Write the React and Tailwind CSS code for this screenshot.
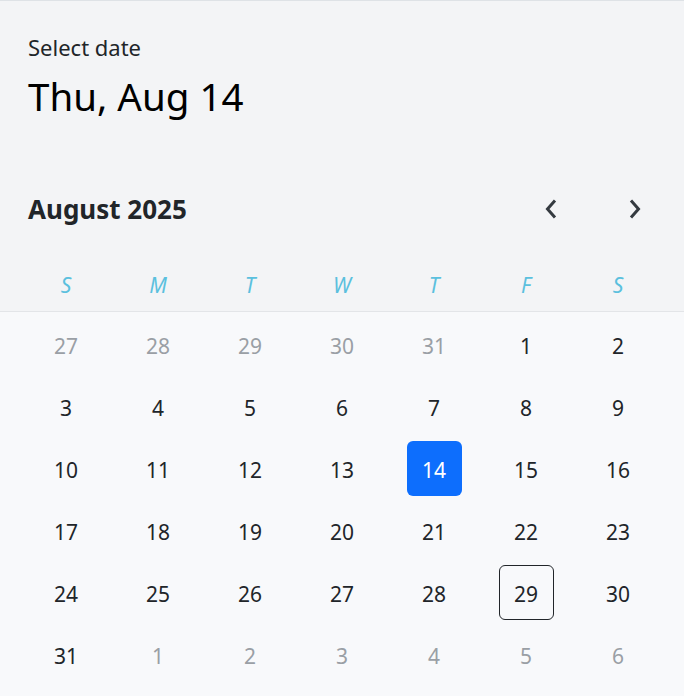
import React from 'react';

const weekdays = ['S', 'M', 'T', 'W', 'T', 'F', 'S'];

// August 2025, Sunday first, with leading/trailing days from adjacent months
const buildDays = () => {
  const days = [];
  [27, 28, 29, 30, 31].forEach(d => days.push({ d, muted: true }));
  for (let d = 1; d <= 31; d++) days.push({ d, muted: false });
  [1, 2, 3, 4, 5, 6].forEach(d => days.push({ d, muted: true }));
  return days;
};

const Chevron = ({ dir }) => (
  <svg width="14" height="22" viewBox="0 0 14 22" fill="none" className="text-[#343a40]">
    <path
      d={dir === 'left' ? 'M11 2.5 L3.5 11 L11 19.5' : 'M3 2.5 L10.5 11 L3 19.5'}
      stroke="currentColor"
      strokeWidth="3"
    />
  </svg>
);

export default function App() {
  const days = buildDays();
  const rows = [];
  for (let i = 0; i < days.length; i += 7) rows.push(days.slice(i, i + 7));

  return (
    <div
      className="min-h-screen bg-[#f8f9fb] text-[#212529]"
      style={{ fontFamily: '"Noto Sans", "Open Sans", sans-serif' }}
    >
      <div className="bg-[#f3f4f6] border-t border-[#dee2e6]">
        <div className="px-7 pt-[31px] text-[22px] leading-[30px]">Select date</div>
        <div className="px-7 mt-2 text-[38.5px] leading-[52px] text-black">Thu, Aug 14</div>

        <div className="mt-[67px] pl-7 pr-[42px] h-10 flex items-center justify-between">
          <span className="text-[26px] font-bold leading-10">August 2025</span>
          <div className="flex items-center gap-[70px]">
            <button className="flex items-center justify-center">
              <Chevron dir="left" />
            </button>
            <button className="flex items-center justify-center">
              <Chevron dir="right" />
            </button>
          </div>
        </div>

        <div className="mt-[31px] px-5 grid grid-cols-7 h-[52px] border-b border-[#e3e5e8]">
          {weekdays.map((w, i) => (
            <div key={i} className="flex justify-center pt-[10px] text-[21px] leading-[30px] italic text-[#5bc0de]">
              {w}
            </div>
          ))}
        </div>
      </div>

      <div className="px-5 pt-1">
        {rows.map((row, ri) => (
          <div key={ri} className="grid grid-cols-7 h-[62px]">
            {row.map((day, ci) => {
              const selected = !day.muted && day.d === 14;
              const today = !day.muted && day.d === 29;
              return (
                <div key={ci} className="flex justify-center pt-px">
                  <div
                    className={`w-[55px] h-[55px] rounded-md flex items-center justify-center pt-[5px] text-[21px] ${
                      selected
                        ? 'bg-[#0d6efd] text-white'
                        : today
                        ? 'border border-[#212529]'
                        : day.muted
                        ? 'text-[#9a9fa5]'
                        : 'text-[#212529]'
                    }`}
                  >
                    {day.d}
                  </div>
                </div>
              );
            })}
          </div>
        ))}
      </div>
    </div>
  );
}
